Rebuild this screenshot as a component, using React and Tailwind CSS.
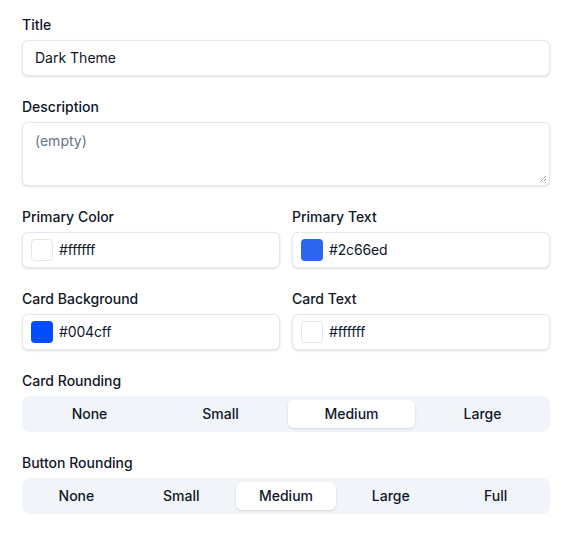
import React from "react";

function Label({ children }) {
  return <div className="text-sm font-medium leading-none text-[#0f172a]">{children}</div>;
}

function ColorField({ label, value, white }) {
  return (
    <div className="flex flex-col gap-2">
      <Label>{label}</Label>
      <div className="flex h-9 items-center gap-1.5 rounded-md border border-[#e2e8f0] bg-white px-2 shadow-sm">
        <div
          className={`h-[22px] w-[22px] shrink-0 rounded ${white ? "border border-[#e2e8f0]" : ""}`}
          style={{ backgroundColor: value }}
        />
        <span className="text-sm tracking-[-0.01em] text-[#0f172a]">{value}</span>
      </div>
    </div>
  );
}

function Segmented({ label, options, active }) {
  return (
    <div className="flex flex-col gap-2">
      <Label>{label}</Label>
      <div className="flex h-9 gap-1 rounded-lg bg-[#f1f5f9] p-1">
        {options.map((o) => (
          <div
            key={o}
            className={`flex flex-1 items-center justify-center rounded-md text-sm font-medium text-[#0f172a] ${
              o === active ? "bg-white shadow-sm" : ""
            }`}
          >
            {o}
          </div>
        ))}
      </div>
    </div>
  );
}

export default function App() {
  return (
    <div
      className="min-h-[540px] w-[573px] bg-white pl-[22px] pr-[23px] pt-[18px]"
      style={{ fontFamily: "Inter, 'Noto Sans', sans-serif" }}
    >
      <div className="flex flex-col gap-6">
        <div className="flex flex-col gap-2">
          <Label>Title</Label>
          <div className="flex h-9 items-center rounded-md border border-[#e2e8f0] bg-white px-3 text-sm text-[#0f172a] shadow-sm">
            Dark Theme
          </div>
        </div>
        <div className="flex flex-col gap-2">
          <Label>Description</Label>
          <div className="relative h-16 rounded-md border border-[#e2e8f0] bg-white px-3 py-2 text-sm text-[#64748b] shadow-sm">
            (empty)
            <svg className="absolute bottom-[2px] right-[2px]" width="8" height="8" viewBox="0 0 8 8">
              <path d="M7 1 L1 7 M7 4 L4 7" stroke="#555" strokeWidth="1" strokeDasharray="1 1" fill="none" />
            </svg>
          </div>
        </div>
        <div className="grid grid-cols-2 gap-3">
          <ColorField label="Primary Color" value="#ffffff" white />
          <ColorField label="Primary Text" value="#2c66ed" />
        </div>
        <div className="grid grid-cols-2 gap-3">
          <ColorField label="Card Background" value="#004cff" />
          <ColorField label="Card Text" value="#ffffff" white />
        </div>
        <Segmented label="Card Rounding" options={["None", "Small", "Medium", "Large"]} active="Medium" />
        <Segmented label="Button Rounding" options={["None", "Small", "Medium", "Large", "Full"]} active="Medium" />
      </div>
    </div>
  );
}
